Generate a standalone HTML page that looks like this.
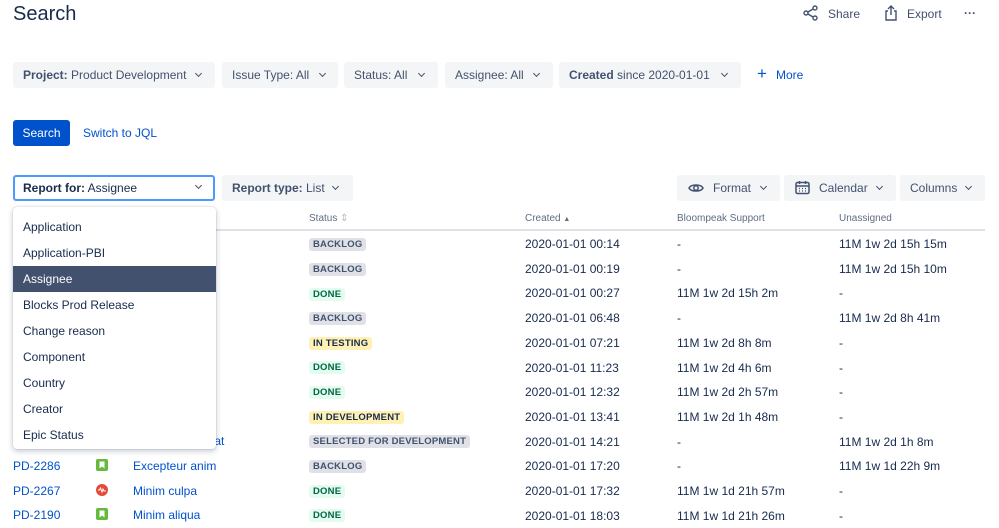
<!DOCTYPE html>
<html><head><meta charset="utf-8"><style>
*{box-sizing:border-box;margin:0;padding:0}
body{width:999px;height:524px;overflow:hidden;background:#fff;font-family:"Liberation Sans",sans-serif;color:#172b4d;position:relative;font-size:12px}
.a{position:absolute;white-space:nowrap}
.btn{position:absolute;background:#f4f5f7;border-radius:3px;height:26px;line-height:26px;padding-left:10px;font-size:12px;color:#42526e}
.btn b{color:#42526e}
.chev{position:absolute;top:9px;width:5px;height:5px;border-right:1.5px solid #42526e;border-bottom:1.5px solid #42526e;transform:rotate(45deg)}
.hd{font-size:10px;color:#5e6c84}
.loz{position:absolute;height:13px;line-height:13px;padding:0 4px;border-radius:3px;font-size:9.5px;font-weight:bold;letter-spacing:.2px}
.bl{background:#dfe1e6;color:#42526e}.dn{background:#e3fcef;color:#006644}.ip{background:#fff0b3;color:#172b4d}
.lnk{color:#0052cc}
.dd{position:absolute;left:13px;top:207px;width:203px;height:242px;background:#fff;border-radius:4px;box-shadow:0 2px 6px rgba(9,30,66,.25),0 0 1px rgba(9,30,66,.3)}
.it{position:absolute;left:0;width:203px;height:26px;line-height:26px;padding-left:10px;color:#172b4d;font-size:12px}
</style></head><body>
<div class="a" style="left:13px;top:3px;font-size:20px;color:#172b4d">Search</div>
<svg class="a" style="left:803px;top:5px" width="16" height="16" viewBox="0 0 16 16" fill="none" stroke="#42526e" stroke-width="1.4"><circle cx="12" cy="3" r="2"/><circle cx="12" cy="13" r="2"/><circle cx="3" cy="8" r="2"/><path d="M5 7l5-3M5 9l5 3"/></svg>
<div class="a" style="left:828px;top:7px;font-size:12px;color:#42526e">Share</div>
<svg class="a" style="left:884px;top:5px" width="14" height="16" viewBox="0 0 14 16" fill="none" stroke="#42526e" stroke-width="1.4"><path d="M4 6H2v9h10V6h-2M7 1v9M4 4l3-3 3 3"/></svg>
<div class="a" style="left:907px;top:7px;font-size:12px;color:#42526e">Export</div>
<div class="a" style="left:964px;top:6px;font-size:12px;color:#42526e;font-weight:bold">···</div>

<div class="btn" style="left:13px;top:62px;width:202px"><b>Project:</b> Product Development<span class="chev" style="left:183px"></span></div>
<div class="btn" style="left:222px;top:62px;width:116px">Issue Type: All<span class="chev" style="left:98px"></span></div>
<div class="btn" style="left:344px;top:62px;width:94px">Status: All<span class="chev" style="left:75px"></span></div>
<div class="btn" style="left:445px;top:62px;width:108px">Assignee: All<span class="chev" style="left:89px"></span></div>
<div class="btn" style="left:559px;top:62px;width:182px"><b>Created</b> since 2020-01-01<span class="chev" style="left:163px"></span></div>
<div class="a" style="left:757px;top:64px;font-size:17px;color:#0052cc">+</div>
<div class="a lnk" style="left:776px;top:68px;font-size:12px">More</div>

<div class="a" style="left:13px;top:120px;width:57px;height:26px;background:#0052cc;border-radius:3px;color:#fff;line-height:26px;text-align:center;font-size:12px">Search</div>
<div class="a lnk" style="left:83px;top:126px;font-size:12px">Switch to JQL</div>

<div class="btn" style="left:13px;top:175px;width:202px;background:#fff;border:2px solid #4c9aff;line-height:22px;padding-left:8px;color:#172b4d"><b style="color:#172b4d">Report for:</b> Assignee<span class="chev" style="left:181px;top:6px"></span></div>
<div class="btn" style="left:222px;top:175px;width:131px"><b>Report type:</b> List<span class="chev" style="left:111px"></span></div>
<div class="btn" style="left:677px;top:175px;width:103px;padding-left:36px">Format<span class="chev" style="left:84px"></span>
<svg style="position:absolute;left:11px;top:6px" width="16" height="14" viewBox="0 0 16 14" fill="none" stroke="#42526e" stroke-width="1.5"><path d="M1 7c2-4 12-4 14 0c-2 4-12 4-14 0z"/><circle cx="8" cy="7" r="2.2"/></svg></div>
<div class="btn" style="left:784px;top:175px;width:112px;padding-left:35px">Calendar<span class="chev" style="left:93px"></span>
<svg style="position:absolute;left:11px;top:5px" width="15" height="15" viewBox="0 0 15 15" fill="none" stroke="#42526e" stroke-width="1.5"><rect x="1" y="2.5" width="13" height="11" rx="1.5"/><path d="M1 6h13M4.5 1v3M10.5 1v3"/><path d="M4 8.5h1M7 8.5h1M10 8.5h1M4 11h1M7 11h1M10 11h1" stroke-width="1.2"/></svg></div>
<div class="btn" style="left:900px;top:175px;width:85px">Columns<span class="chev" style="left:66px"></span></div>

<div class="a hd" style="left:309px;top:213px">Status <span style="color:#b3bac5">⇕</span></div>
<div class="a hd" style="left:525px;top:213px">Created <span style="font-size:7px">▲</span></div>
<div class="a hd" style="left:677px;top:213px">Bloompeak Support</div>
<div class="a hd" style="left:839px;top:213px">Unassigned</div>
<div class="a" style="left:13px;top:229px;width:972px;height:2px;background:#dfe1e6"></div>

<div class="loz bl" style="left:309px;top:238px">BACKLOG</div>
<div class="loz bl" style="left:309px;top:263px">BACKLOG</div>
<div class="loz dn" style="left:309px;top:288px">DONE</div>
<div class="loz bl" style="left:309px;top:312px">BACKLOG</div>
<div class="loz ip" style="left:309px;top:337px">IN TESTING</div>
<div class="loz dn" style="left:309px;top:361px">DONE</div>
<div class="loz dn" style="left:309px;top:386px">DONE</div>
<div class="loz ip" style="left:309px;top:411px">IN DEVELOPMENT</div>
<div class="loz bl" style="left:309px;top:435px">SELECTED FOR DEVELOPMENT</div>
<div class="loz bl" style="left:309px;top:460px">BACKLOG</div>
<div class="loz dn" style="left:309px;top:485px">DONE</div>
<div class="loz dn" style="left:309px;top:509px">DONE</div>

<div style="position:absolute;left:525px;top:232px;line-height:24.7px;font-size:12px">2020-01-01 00:14<br>2020-01-01 00:19<br>2020-01-01 00:27<br>2020-01-01 06:48<br>2020-01-01 07:21<br>2020-01-01 11:23<br>2020-01-01 12:32<br>2020-01-01 13:41<br>2020-01-01 14:21<br>2020-01-01 17:20<br>2020-01-01 17:32<br>2020-01-01 18:03</div>
<div style="position:absolute;left:677px;top:232px;line-height:24.7px;font-size:12px">-<br>-<br>11M 1w 2d 15h 2m<br>-<br>11M 1w 2d 8h 8m<br>11M 1w 2d 4h 6m<br>11M 1w 2d 2h 57m<br>11M 1w 2d 1h 48m<br>-<br>-<br>11M 1w 1d 21h 57m<br>11M 1w 1d 21h 26m</div>
<div style="position:absolute;left:839px;top:232px;line-height:24.7px;font-size:12px">11M 1w 2d 15h 15m<br>11M 1w 2d 15h 10m<br>-<br>11M 1w 2d 8h 41m<br>-<br>-<br>-<br>-<br>11M 1w 2d 1h 8m<br>11M 1w 1d 22h 9m<br>-<br>-</div>

<div class="a lnk" style="left:200px;top:311px">on</div>
<div class="a lnk" style="left:195px;top:434px">fugiat</div>
<div class="a lnk" style="left:13px;top:459px">PD-2286</div>
<div class="a lnk" style="left:13px;top:484px">PD-2267</div>
<div class="a lnk" style="left:13px;top:508px">PD-2190</div>
<div class="a lnk" style="left:133px;top:459px">Excepteur anim</div>
<div class="a lnk" style="left:133px;top:484px">Minim culpa</div>
<div class="a lnk" style="left:133px;top:508px">Minim aliqua</div>
<svg class="a" style="left:96px;top:459px" width="12" height="12" viewBox="0 0 12 12"><rect width="12" height="12" rx="2" fill="#63ba3c"/><path d="M3.5 2.5h5v7L6 7.5 3.5 9.5z" fill="#fff"/></svg>
<svg class="a" style="left:96px;top:484px" width="12" height="12" viewBox="0 0 12 12"><circle cx="6" cy="6" r="6" fill="#e5493a"/><path d="M2 6h1.5l1-2 1.5 4 1-3 1 2H10" fill="none" stroke="#fff" stroke-width="1"/></svg>
<svg class="a" style="left:96px;top:508px" width="12" height="12" viewBox="0 0 12 12"><rect width="12" height="12" rx="2" fill="#63ba3c"/><path d="M3.5 2.5h5v7L6 7.5 3.5 9.5z" fill="#fff"/></svg>

<div class="dd">
<div class="it" style="top:7px">Application</div>
<div class="it" style="top:33px">Application-PBI</div>
<div class="it" style="top:59px;background:#42526e;color:#fff">Assignee</div>
<div class="it" style="top:85px">Blocks Prod Release</div>
<div class="it" style="top:111px">Change reason</div>
<div class="it" style="top:137px">Component</div>
<div class="it" style="top:163px">Country</div>
<div class="it" style="top:189px">Creator</div>
<div class="it" style="top:215px">Epic Status</div>
</div>
</body></html>
